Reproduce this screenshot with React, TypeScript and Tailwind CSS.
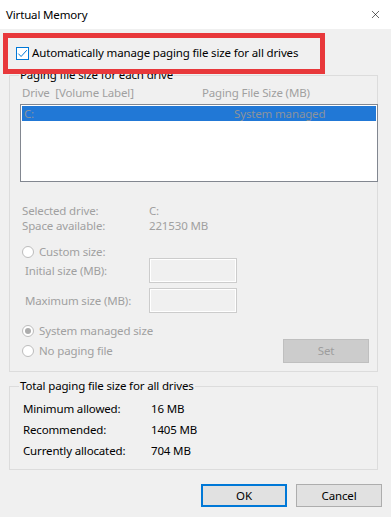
import { X } from 'lucide-react';

const font = 'font-["Noto_Sans","Open_Sans","Liberation_Sans",sans-serif]';

function Radio({ checked }: { checked?: boolean }) {
    return (
        <span className="w-[12px] h-[12px] rounded-full border border-[#bcbcbc] bg-white flex items-center justify-center shrink-0">
            {checked && <span className="w-[6px] h-[6px] rounded-full bg-[#acacac]" />}
        </span>
    );
}

function TextBox() {
    return <div className="w-[88px] h-[25px] border border-[#cccccc] bg-[#f0f0f0] shadow-[inset_0_0_0_1px_#ffffff]" />;
}

function App() {
    return (
        <div className={`relative w-[391px] h-[517px] bg-[#f0f0f0] overflow-hidden text-[11.5px] tracking-[-0.15px] leading-[14px] text-black ${font}`}>
            {/* Barra de título */}
            <div className="h-[29px] bg-white flex items-center justify-between pl-[6px] pr-[9px]">
                <span>Virtual Memory</span>
                <X size={13} strokeWidth={1.1} className="text-black" />
            </div>

            <div className="pl-[9px] pr-[13px]">
                {/* Checkbox */}
                <div className="h-[46px] pt-[17px] pl-[7px]">
                    <div className="flex items-center h-[14px] gap-[3px]">
                        <span className="w-[13px] h-[13px] border border-[#0078d7] bg-white flex items-center justify-center">
                            <svg width="11" height="11" viewBox="0 0 11 11">
                                <path d="M1.3 5.6 L4.1 8.5 L9.8 2.2" fill="none" stroke="#0078d7" strokeWidth="1" />
                            </svg>
                        </span>
                        <span>Automatically manage paging file size for all drives</span>
                    </div>
                </div>

                {/* Grupo: por unidade */}
                <div className="relative h-[297px] border border-[#dcdcdc]">
                    <span className="absolute left-[9px] top-[-8px] px-[1px] bg-[#f0f0f0]">Paging file size for each drive</span>
                    <div className="flex flex-col pl-[12px] text-[#a0a0a0]">
                        <div className="mt-[9px] h-[16px] flex items-center">
                            <span className="w-[180px]">Drive&nbsp; [Volume Label]</span>
                            <span>Paging File Size (MB)</span>
                        </div>
                        <div className="mt-[3px] -ml-[2px] -mr-[1px] h-[78px] border border-[#828790] bg-white p-[1px]">
                            <div className="h-[15px] bg-[#2178d6] flex items-center text-[#8b939c]">
                                <span className="w-[212px] pl-[2px]">C:</span>
                                <span>System managed</span>
                            </div>
                        </div>
                        <div className="mt-[21px] h-[15px] flex items-center">
                            <span className="w-[127px]">Selected drive:</span>
                            <span>C:</span>
                        </div>
                        <div className="h-[15px] flex items-center">
                            <span className="w-[127px]">Space available:</span>
                            <span>221530 MB</span>
                        </div>
                        <div className="mt-[12px] h-[13px] flex items-center gap-[5px]">
                            <Radio />
                            <span>Custom size:</span>
                        </div>
                        <div className="h-[25px] flex items-center pl-[3px]">
                            <span className="w-[124px]">Initial size (MB):</span>
                            <TextBox />
                        </div>
                        <div className="mt-[5px] h-[25px] flex items-center pl-[3px]">
                            <span className="w-[124px]">Maximum size (MB):</span>
                            <TextBox />
                        </div>
                        <div className="flex items-start justify-between pr-[8px]">
                            <div className="flex flex-col gap-[5px] mt-[10px]">
                                <div className="h-[15px] flex items-center gap-[5px]">
                                    <Radio checked />
                                    <span>System managed size</span>
                                </div>
                                <div className="h-[15px] flex items-center gap-[5px]">
                                    <Radio />
                                    <span>No paging file</span>
                                </div>
                            </div>
                            <button className="mt-[26px] w-[86px] h-[24px] bg-[#cccccc] border border-[#bfbfbf] text-[#9d9d9d]">
                                Set
                            </button>
                        </div>
                    </div>
                </div>

                {/* Grupo: total */}
                <div className="relative mt-[14px] h-[84px] border border-[#dcdcdc]">
                    <span className="absolute left-[9px] top-[-8px] px-[1px] bg-[#f0f0f0]">Total paging file size for all drives</span>
                    <div className="flex flex-col gap-[6px] pt-[14px] pl-[13px]">
                        {[
                            ['Minimum allowed:', '16 MB'],
                            ['Recommended:', '1405 MB'],
                            ['Currently allocated:', '704 MB'],
                        ].map(([label, value]) => (
                            <div key={label} className="h-[15px] flex items-center">
                                <span className="w-[128px]">{label}</span>
                                <span>{value}</span>
                            </div>
                        ))}
                    </div>
                </div>

                {/* Botões */}
                <div className="mt-[14px] -mr-[4px] flex justify-end gap-[9px]">
                    <button className="w-[86px] h-[23px] bg-[#e1e1e1] border-2 border-[#0078d7]">OK</button>
                    <button className="w-[86px] h-[23px] bg-[#e1e1e1] border border-[#adadad]">Cancel</button>
                </div>
            </div>

            {/* Destaque vermelho */}
            <div className="absolute left-[3px] top-[33px] w-[322px] h-[41px] border-[5px] border-[#e8383b]" />
        </div>
    );
}

export default App;
